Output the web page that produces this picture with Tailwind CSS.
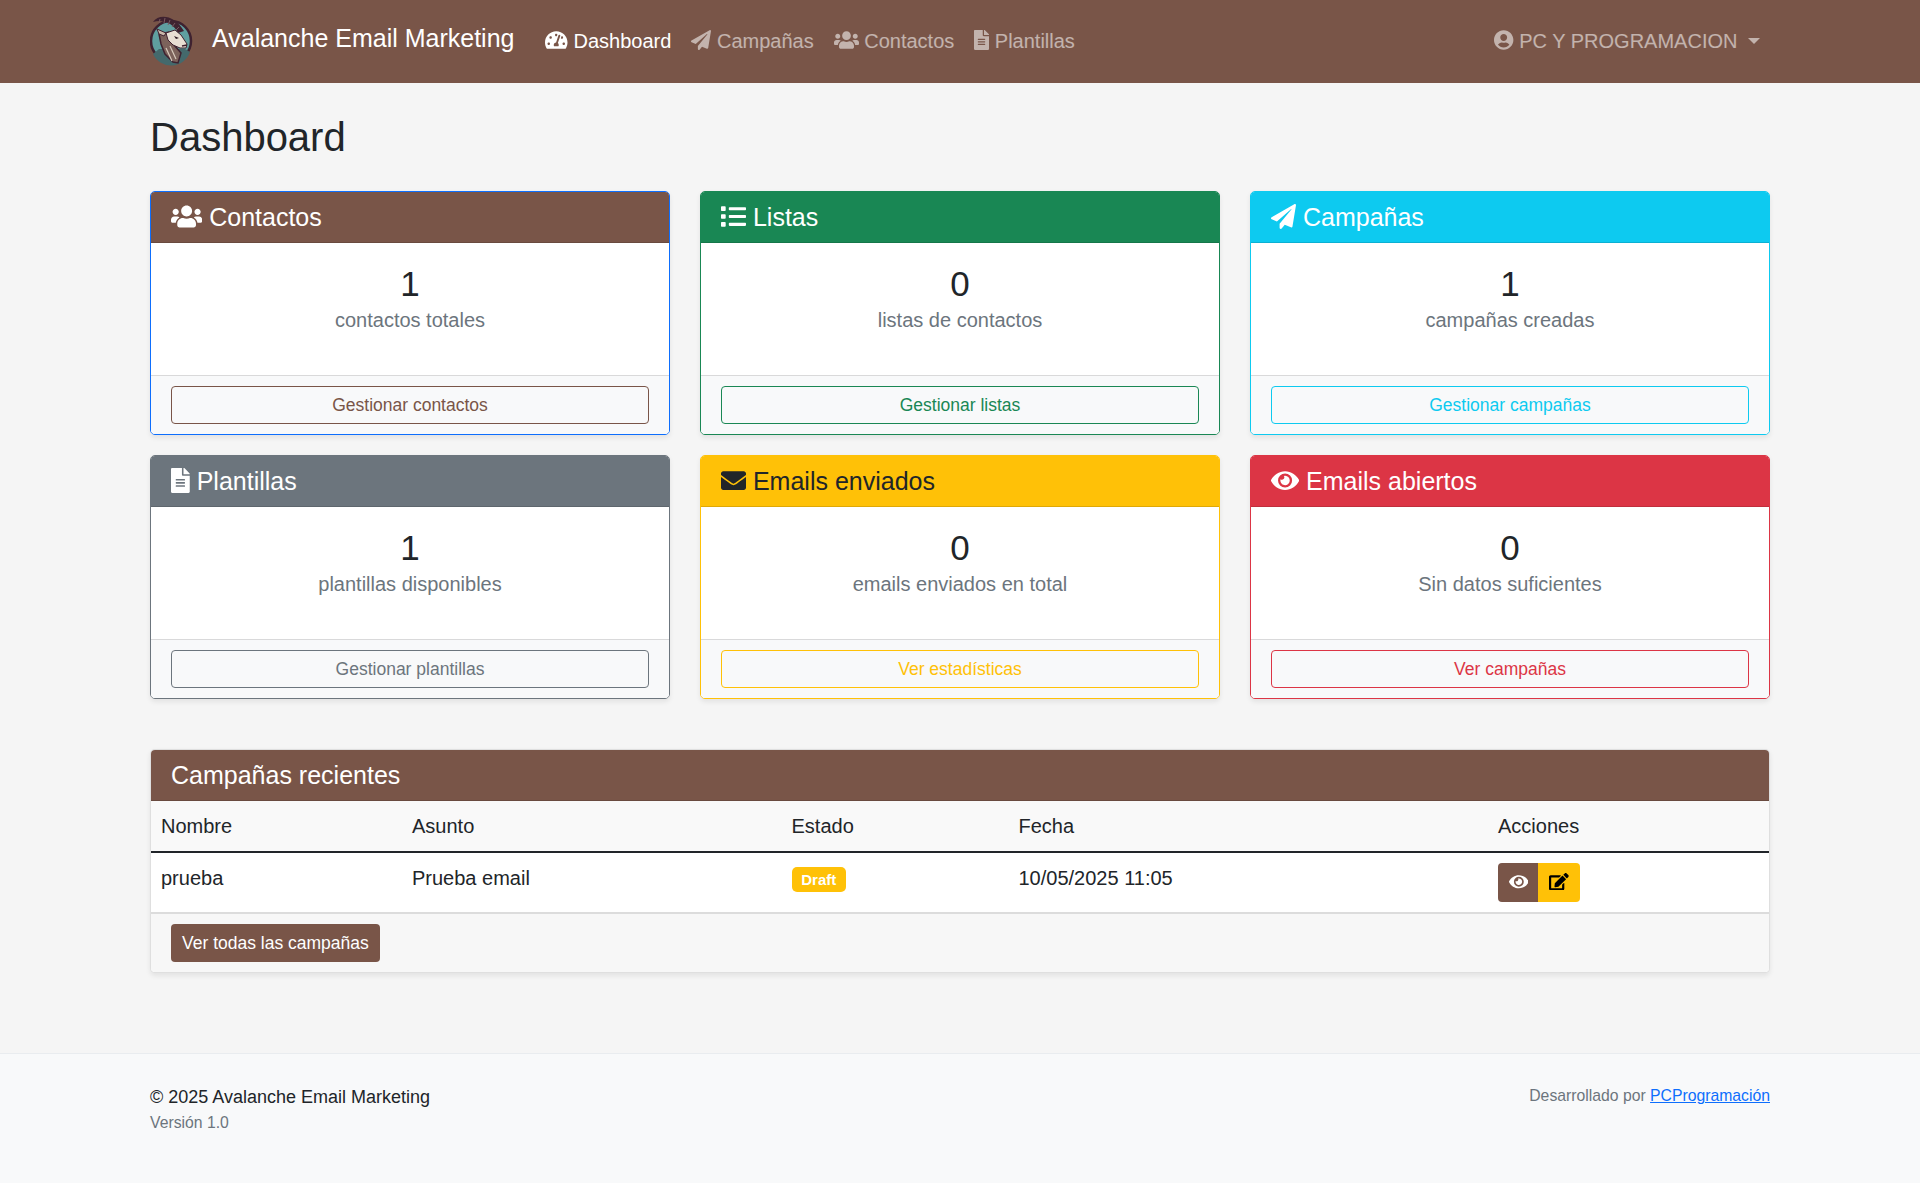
<!doctype html>
<html lang="es">
<head>
<meta charset="utf-8">
<title>Dashboard - Avalanche Email Marketing</title>
<script src="https://cdn.jsdelivr.net/npm/@tailwindcss/browser@4"></script>
</head>
<body class="min-h-screen flex flex-col bg-[#f5f5f5] text-[#212529] text-[20px] leading-[1.5] font-['Liberation_Sans',Arial,sans-serif]">

<!-- navbar -->
<nav class="h-[83px] bg-[#795548] shrink-0">
  <div class="w-[1620px] h-full mx-auto flex items-center">
    <a href="#" class="flex items-center text-white text-[25px] whitespace-nowrap">
      <svg class="w-[45px] h-[50px] mt-[-1px]" viewBox="5 8 45 50">
        <circle cx="26" cy="33" r="20" fill="#5f9fa0" stroke="#3f2230" stroke-width="2.5"/>
        <path d="M8 46 L14 41 L40 41 L45 44 A20 20 0 0 1 8 46z" fill="#44696c"/>
        <path d="M14 26 L24 24 L30 38 L36 45 L33 55 L28 54 L20 46 L16 36z" fill="#7c625b" stroke="#3f2230" stroke-width="1.5"/>
        <path d="M21 40 L27 53 M25 38 L31 51" stroke="#d8cabd" stroke-width="1.2" fill="none"/>
        <path d="M8 14 C14 5 30 7 39 23 L33 25 C28 15 18 11 8 14z" fill="#3f2230"/>
        <path d="M15 11 l-1 4 M20 10 l-1 5 M25 12 l-2 5 M30 15 l-3 4 M34 19 l-3 3" stroke="#7b5b60" stroke-width="1" fill="none"/>
        <path d="M12 21 L21 25 L19 28 L14 26z" fill="#c9b8aa" stroke="#3f2230" stroke-width="1"/>
        <path d="M21 25 L30 22 L36 27 L42 36 L41 40 L35 40 L28 37 L23 32z" fill="#e8dfd4" stroke="#3f2230" stroke-width="1"/>
        <path d="M29 28 L34 30 L31 31z" fill="#2c1a22"/>
        <path d="M37 38 L42 37" stroke="#3f2230" stroke-width="1.5"/>
      </svg>
      <span class="ml-[17px] pb-[6px]">Avalanche Email Marketing</span>
    </a>
    <div class="flex ml-[21px] pb-[2px] whitespace-nowrap">
      <a href="#" class="px-[10px] text-white">
        <svg class="inline w-[1.125em] h-[1em] align-[-0.125em] fill-current" viewBox="0 0 576 512"><path d="M288 32C128.94 32 0 160.94 0 320c0 52.8 14.25 102.26 39.06 144.8 5.61 9.62 16.3 15.2 27.44 15.2h443c11.14 0 21.83-5.58 27.44-15.2C561.75 422.26 576 372.8 576 320c0-159.06-128.94-288-288-288zm0 64c14.71 0 26.58 10.13 30.32 23.65-1.11 2.26-2.64 4.23-3.45 6.67l-9.22 27.67c-5.13 3.49-10.97 6.01-17.64 6.01-17.67 0-32-14.33-32-32S270.33 96 288 96zM96 384c-17.67 0-32-14.33-32-32s14.33-32 32-32 32 14.33 32 32-14.33 32-32 32zm48-160c-17.67 0-32-14.33-32-32s14.33-32 32-32 32 14.33 32 32-14.33 32-32 32zm246.77-72.41l-61.33 184C343.13 347.33 352 364.54 352 384c0 11.72-3.38 22.55-8.88 32H232.88c-5.5-9.45-8.88-20.28-8.88-32 0-33.94 26.5-61.43 59.9-63.59l61.34-184.01c4.17-12.56 17.73-19.45 30.36-15.17 12.57 4.19 19.35 17.79 15.17 30.36zm14.66 57.2l15.52-46.55c3.47-1.29 7.13-2.23 11.05-2.23 17.67 0 32 14.33 32 32s-14.33 32-32 32c-11.38-.01-20.89-6.28-26.57-15.22zM480 384c-17.67 0-32-14.33-32-32s14.33-32 32-32 32 14.33 32 32-14.33 32-32 32z"/></svg>
        Dashboard
      </a>
      <a href="#" class="px-[10px] text-white/55">
        <svg class="inline w-[1em] h-[1em] align-[-0.125em] fill-current" viewBox="0 0 512 512"><path d="M476 3.2L12.5 270.6c-18.1 10.4-15.8 35.6 2.2 43.2L121 358.4l287.3-253.2c5.5-4.9 13.3 2.6 8.6 8.3L176 407v80.5c0 23.6 28.5 32.9 42.5 15.8L282 426l124.6 52.2c14.2 6 30.4-2.9 33-18.2l72-432C515 7.8 493.3-6.8 476 3.2z"/></svg>
        Campañas
      </a>
      <a href="#" class="px-[10px] text-white/55">
        <svg class="inline w-[1.25em] h-[1em] align-[-0.125em] fill-current" viewBox="0 0 640 512"><path d="M96 224c35.3 0 64-28.7 64-64s-28.7-64-64-64-64 28.7-64 64 28.7 64 64 64zm448 0c35.3 0 64-28.7 64-64s-28.7-64-64-64-64 28.7-64 64 28.7 64 64 64zm32 32h-64c-17.6 0-33.5 7.1-45.1 18.6 40.3 22.1 68.9 62 75.1 109.4h66c17.7 0 32-14.3 32-32v-32c0-35.3-28.7-64-64-64zm-256 0c61.9 0 112-50.1 112-112S381.9 32 320 32 208 82.1 208 144s50.1 112 112 112zm76.8 32h-8.3c-20.8 10-43.9 16-68.5 16s-47.6-6-68.5-16h-8.3C179.6 288 128 339.6 128 403.2V432c0 26.5 21.5 48 48 48h288c26.5 0 48-21.5 48-48v-28.8c0-63.6-51.6-115.2-115.2-115.2zm-223.7-13.4C161.5 263.1 145.6 256 128 256H64c-35.3 0-64 28.7-64 64v32c0 17.7 14.3 32 32 32h65.9c6.3-47.4 34.9-87.3 75.2-109.4z"/></svg>
        Contactos
      </a>
      <a href="#" class="px-[10px] text-white/55">
        <svg class="inline w-[0.75em] h-[1em] align-[-0.125em] fill-current" viewBox="0 0 384 512"><path d="M224 136V0H24C10.7 0 0 10.7 0 24v464c0 13.3 10.7 24 24 24h336c13.3 0 24-10.7 24-24V160H248c-13.2 0-24-10.8-24-24zm64 236c0 6.6-5.4 12-12 12H108c-6.6 0-12-5.4-12-12v-8c0-6.6 5.4-12 12-12h168c6.6 0 12 5.4 12 12v8zm0-64c0 6.6-5.4 12-12 12H108c-6.6 0-12-5.4-12-12v-8c0-6.6 5.4-12 12-12h168c6.6 0 12 5.4 12 12v8zm0-72v8c0 6.6-5.4 12-12 12H108c-6.6 0-12-5.4-12-12v-8c0-6.6 5.4-12 12-12h168c6.6 0 12 5.4 12 12zm96-114.1v6.1H256V0h6.1c6.4 0 12.5 2.5 17 7l97.9 98c4.5 4.5 7 10.6 7 16.9z"/></svg>
        Plantillas
      </a>
    </div>
    <a href="#" class="ml-auto px-[10px] pb-[2px] text-white/55 whitespace-nowrap">
      <svg class="inline w-[0.969em] h-[1em] align-[-0.125em] fill-current" viewBox="0 0 496 512"><path d="M248 8C111 8 0 119 0 256s111 248 248 248 248-111 248-248S385 8 248 8zm0 96c48.6 0 88 39.4 88 88s-39.4 88-88 88-88-39.4-88-88 39.4-88 88-88zm0 344c-58.7 0-111.3-26.6-146.5-68.2 18.8-35.4 55.6-59.8 98.5-59.8 2.4 0 4.8.4 7.1 1.1 13 4.2 26.6 6.9 40.9 6.9 14.3 0 28-2.7 40.9-6.9 2.3-.7 4.7-1.1 7.1-1.1 42.9 0 79.7 24.4 98.5 59.8C359.3 421.4 306.7 448 248 448z"/></svg>
      PC Y PROGRAMACION
      <span class="inline-block ml-[5px] align-[4px] border-t-[6px] border-x-[6px] border-x-transparent border-t-current"></span>
    </a>
  </div>
</nav>

<main class="w-[1620px] mx-auto pt-[30px] shrink-0">
  <h2 class="text-[40px] leading-[48px] mb-[30px] font-normal">Dashboard</h2>

  <!-- stat cards -->
  <div class="grid grid-cols-3 gap-x-[30px] gap-y-[20px]">

    <div class="bg-white border border-[#0d6efd] rounded-[5px] shadow-[0_2.5px_5px_rgba(0,0,0,0.075)] overflow-hidden">
      <div class="bg-[#795548] text-white text-[25px] leading-[30px] px-[20px] py-[10px] border-b border-black/12.5">
        <svg class="inline w-[1.25em] h-[1em] align-[-0.125em] fill-current" viewBox="0 0 640 512"><path d="M96 224c35.3 0 64-28.7 64-64s-28.7-64-64-64-64 28.7-64 64 28.7 64 64 64zm448 0c35.3 0 64-28.7 64-64s-28.7-64-64-64-64 28.7-64 64 28.7 64 64 64zm32 32h-64c-17.6 0-33.5 7.1-45.1 18.6 40.3 22.1 68.9 62 75.1 109.4h66c17.7 0 32-14.3 32-32v-32c0-35.3-28.7-64-64-64zm-256 0c61.9 0 112-50.1 112-112S381.9 32 320 32 208 82.1 208 144s50.1 112 112 112zm76.8 32h-8.3c-20.8 10-43.9 16-68.5 16s-47.6-6-68.5-16h-8.3C179.6 288 128 339.6 128 403.2V432c0 26.5 21.5 48 48 48h288c26.5 0 48-21.5 48-48v-28.8c0-63.6-51.6-115.2-115.2-115.2zm-223.7-13.4C161.5 263.1 145.6 256 128 256H64c-35.3 0-64 28.7-64 64v32c0 17.7 14.3 32 32 32h65.9c6.3-47.4 34.9-87.3 75.2-109.4z"/></svg>
        Contactos
      </div>
      <div class="p-[20px] pb-[40px] text-center">
        <h3 class="text-[35px] leading-[42px] font-normal">1</h3>
        <p class="text-[#6c757d]">contactos totales</p>
      </div>
      <div class="bg-[#f8f9fa] border-t border-black/12.5 px-[20px] py-[10px]">
        <a href="#" class="block text-center border border-[#795548] text-[#795548] rounded-[4px] text-[17.5px] leading-[26px] py-[5px]">Gestionar contactos</a>
      </div>
    </div>

    <div class="bg-white border border-[#198754] rounded-[5px] shadow-[0_2.5px_5px_rgba(0,0,0,0.075)] overflow-hidden">
      <div class="bg-[#198754] text-white text-[25px] leading-[30px] px-[20px] py-[10px] border-b border-black/12.5">
        <svg class="inline w-[1em] h-[1em] align-[-0.125em] fill-current" viewBox="0 0 512 512"><path d="M80 368H16a16 16 0 0 0-16 16v64a16 16 0 0 0 16 16h64a16 16 0 0 0 16-16v-64a16 16 0 0 0-16-16zm0-320H16A16 16 0 0 0 0 64v64a16 16 0 0 0 16 16h64a16 16 0 0 0 16-16V64a16 16 0 0 0-16-16zm0 160H16a16 16 0 0 0-16 16v64a16 16 0 0 0 16 16h64a16 16 0 0 0 16-16v-64a16 16 0 0 0-16-16zm416 176H176a16 16 0 0 0-16 16v32a16 16 0 0 0 16 16h320a16 16 0 0 0 16-16v-32a16 16 0 0 0-16-16zm0-320H176a16 16 0 0 0-16 16v32a16 16 0 0 0 16 16h320a16 16 0 0 0 16-16V80a16 16 0 0 0-16-16zm0 160H176a16 16 0 0 0-16 16v32a16 16 0 0 0 16 16h320a16 16 0 0 0 16-16v-32a16 16 0 0 0-16-16z"/></svg>
        Listas
      </div>
      <div class="p-[20px] pb-[40px] text-center">
        <h3 class="text-[35px] leading-[42px] font-normal">0</h3>
        <p class="text-[#6c757d]">listas de contactos</p>
      </div>
      <div class="bg-[#f8f9fa] border-t border-black/12.5 px-[20px] py-[10px]">
        <a href="#" class="block text-center border border-[#198754] text-[#198754] rounded-[4px] text-[17.5px] leading-[26px] py-[5px]">Gestionar listas</a>
      </div>
    </div>

    <div class="bg-white border border-[#0dcaf0] rounded-[5px] shadow-[0_2.5px_5px_rgba(0,0,0,0.075)] overflow-hidden">
      <div class="bg-[#0dcaf0] text-white text-[25px] leading-[30px] px-[20px] py-[10px] border-b border-black/12.5">
        <svg class="inline w-[1em] h-[1em] align-[-0.125em] fill-current" viewBox="0 0 512 512"><path d="M476 3.2L12.5 270.6c-18.1 10.4-15.8 35.6 2.2 43.2L121 358.4l287.3-253.2c5.5-4.9 13.3 2.6 8.6 8.3L176 407v80.5c0 23.6 28.5 32.9 42.5 15.8L282 426l124.6 52.2c14.2 6 30.4-2.9 33-18.2l72-432C515 7.8 493.3-6.8 476 3.2z"/></svg>
        Campañas
      </div>
      <div class="p-[20px] pb-[40px] text-center">
        <h3 class="text-[35px] leading-[42px] font-normal">1</h3>
        <p class="text-[#6c757d]">campañas creadas</p>
      </div>
      <div class="bg-[#f8f9fa] border-t border-black/12.5 px-[20px] py-[10px]">
        <a href="#" class="block text-center border border-[#0dcaf0] text-[#0dcaf0] rounded-[4px] text-[17.5px] leading-[26px] py-[5px]">Gestionar campañas</a>
      </div>
    </div>

    <div class="bg-white border border-[#6c757d] rounded-[5px] shadow-[0_2.5px_5px_rgba(0,0,0,0.075)] overflow-hidden">
      <div class="bg-[#6c757d] text-white text-[25px] leading-[30px] px-[20px] py-[10px] border-b border-black/12.5">
        <svg class="inline w-[0.75em] h-[1em] align-[-0.125em] fill-current" viewBox="0 0 384 512"><path d="M224 136V0H24C10.7 0 0 10.7 0 24v464c0 13.3 10.7 24 24 24h336c13.3 0 24-10.7 24-24V160H248c-13.2 0-24-10.8-24-24zm64 236c0 6.6-5.4 12-12 12H108c-6.6 0-12-5.4-12-12v-8c0-6.6 5.4-12 12-12h168c6.6 0 12 5.4 12 12v8zm0-64c0 6.6-5.4 12-12 12H108c-6.6 0-12-5.4-12-12v-8c0-6.6 5.4-12 12-12h168c6.6 0 12 5.4 12 12v8zm0-72v8c0 6.6-5.4 12-12 12H108c-6.6 0-12-5.4-12-12v-8c0-6.6 5.4-12 12-12h168c6.6 0 12 5.4 12 12zm96-114.1v6.1H256V0h6.1c6.4 0 12.5 2.5 17 7l97.9 98c4.5 4.5 7 10.6 7 16.9z"/></svg>
        Plantillas
      </div>
      <div class="p-[20px] pb-[40px] text-center">
        <h3 class="text-[35px] leading-[42px] font-normal">1</h3>
        <p class="text-[#6c757d]">plantillas disponibles</p>
      </div>
      <div class="bg-[#f8f9fa] border-t border-black/12.5 px-[20px] py-[10px]">
        <a href="#" class="block text-center border border-[#6c757d] text-[#6c757d] rounded-[4px] text-[17.5px] leading-[26px] py-[5px]">Gestionar plantillas</a>
      </div>
    </div>

    <div class="bg-white border border-[#ffc107] rounded-[5px] shadow-[0_2.5px_5px_rgba(0,0,0,0.075)] overflow-hidden">
      <div class="bg-[#ffc107] text-[#212529] text-[25px] leading-[30px] px-[20px] py-[10px] border-b border-black/12.5">
        <svg class="inline w-[1em] h-[1em] align-[-0.125em] fill-current" viewBox="0 0 512 512"><path d="M502.3 190.8c3.9-3.1 9.7-.2 9.7 4.7V400c0 26.5-21.5 48-48 48H48c-26.5 0-48-21.5-48-48V195.6c0-5 5.7-7.8 9.7-4.7 22.4 17.4 52.1 39.5 154.1 113.6 21.1 15.4 56.7 47.8 92.2 47.6 35.7.3 72-32.8 92.3-47.6 102-74.1 131.6-96.3 154-113.7zM256 320c23.2.4 56.6-29.2 73.4-41.4 132.7-96.3 142.8-104.7 173.4-128.7 5.8-4.5 9.2-11.5 9.2-18.9v-19c0-26.5-21.5-48-48-48H48C21.5 64 0 85.5 0 112v19c0 7.4 3.4 14.3 9.2 18.9 30.6 23.9 40.7 32.4 173.4 128.7 16.8 12.2 50.2 41.8 73.4 41.4z"/></svg>
        Emails enviados
      </div>
      <div class="p-[20px] pb-[40px] text-center">
        <h3 class="text-[35px] leading-[42px] font-normal">0</h3>
        <p class="text-[#6c757d]">emails enviados en total</p>
      </div>
      <div class="bg-[#f8f9fa] border-t border-black/12.5 px-[20px] py-[10px]">
        <a href="#" class="block text-center border border-[#ffc107] text-[#ffc107] rounded-[4px] text-[17.5px] leading-[26px] py-[5px]">Ver estadísticas</a>
      </div>
    </div>

    <div class="bg-white border border-[#dc3545] rounded-[5px] shadow-[0_2.5px_5px_rgba(0,0,0,0.075)] overflow-hidden">
      <div class="bg-[#dc3545] text-white text-[25px] leading-[30px] px-[20px] py-[10px] border-b border-black/12.5">
        <svg class="inline w-[1.125em] h-[1em] align-[-0.125em] fill-current" viewBox="0 0 576 512"><path d="M572.52 241.4C518.29 135.59 410.93 64 288 64S57.68 135.64 3.48 241.41a32.35 32.35 0 0 0 0 29.19C57.71 376.41 165.07 448 288 448s230.32-71.64 284.52-177.41a32.35 32.35 0 0 0 0-29.19zM288 400a144 144 0 1 1 144-144 143.93 143.93 0 0 1-144 144zm0-240a95.31 95.31 0 0 0-25.31 3.79 47.85 47.85 0 0 1-66.9 66.9A95.78 95.78 0 1 0 288 160z"/></svg>
        Emails abiertos
      </div>
      <div class="p-[20px] pb-[40px] text-center">
        <h3 class="text-[35px] leading-[42px] font-normal">0</h3>
        <p class="text-[#6c757d]">Sin datos suficientes</p>
      </div>
      <div class="bg-[#f8f9fa] border-t border-black/12.5 px-[20px] py-[10px]">
        <a href="#" class="block text-center border border-[#dc3545] text-[#dc3545] rounded-[4px] text-[17.5px] leading-[26px] py-[5px]">Ver campañas</a>
      </div>
    </div>
  </div>

  <!-- recent campaigns -->
  <div class="mt-[50px] bg-white border border-black/12.5 rounded-[5px] shadow-[0_2.5px_5px_rgba(0,0,0,0.075)] overflow-hidden">
    <div class="bg-[#795548] text-white text-[25px] leading-[30px] px-[20px] py-[10px] border-b border-black/12.5">Campañas recientes</div>
    <table class="w-full table-fixed border-collapse">
      <thead class="bg-[#f9f9f9]">
        <tr class="border-b-2 border-[#212529]">
          <th class="w-[251px] p-[10px] text-left font-normal">Nombre</th>
          <th class="w-[379.5px] p-[10px] text-left font-normal">Asunto</th>
          <th class="w-[227px] p-[10px] text-left font-normal">Estado</th>
          <th class="w-[479.5px] p-[10px] text-left font-normal">Fecha</th>
          <th class="p-[10px] text-left font-normal">Acciones</th>
        </tr>
      </thead>
      <tbody>
        <tr>
          <td class="p-[10px] align-top">prueba</td>
          <td class="p-[10px] align-top">Prueba email</td>
          <td class="p-[10px] align-top"><span class="inline-block bg-[#ffc107] text-white text-[15px] leading-[15px] font-bold px-[9.75px] py-[5.25px] rounded-[5px] align-baseline">Draft</span></td>
          <td class="p-[10px] align-top">10/05/2025 11:05</td>
          <td class="p-[10px] align-top">
            <div class="flex">
              <a href="#" class="w-[40px] pl-[1px] text-center bg-[#795548] text-white text-[17.5px] leading-[27px] py-[6px] rounded-l-[4px]">
                <svg class="inline w-[1.125em] h-[1em] align-[-0.125em] fill-current" viewBox="0 0 576 512"><path d="M572.52 241.4C518.29 135.59 410.93 64 288 64S57.68 135.64 3.48 241.41a32.35 32.35 0 0 0 0 29.19C57.71 376.41 165.07 448 288 448s230.32-71.64 284.52-177.41a32.35 32.35 0 0 0 0-29.19zM288 400a144 144 0 1 1 144-144 143.93 143.93 0 0 1-144 144zm0-240a95.31 95.31 0 0 0-25.31 3.79 47.85 47.85 0 0 1-66.9 66.9A95.78 95.78 0 1 0 288 160z"/></svg>
              </a>
              <a href="#" class="w-[42px] text-center bg-[#ffc107] text-black text-[17.5px] leading-[27px] py-[6px] rounded-r-[4px]">
                <svg class="inline w-[1.125em] h-[1em] align-[-0.125em] fill-current" viewBox="0 0 576 512"><path d="M402.6 83.2l90.2 90.2c3.8 3.8 3.8 10 0 13.8L274.4 405.6l-92.8 10.3c-12.4 1.4-22.9-9.1-21.5-21.5l10.3-92.8L388.8 83.2c3.8-3.8 10-3.8 13.8 0zm162-22.9l-48.8-48.8c-15.2-15.2-39.9-15.2-55.2 0l-35.4 35.4c-3.8 3.8-3.8 10 0 13.8l90.2 90.2c3.8 3.8 10 3.8 13.8 0l35.4-35.4c15.2-15.3 15.2-40 0-55.2zM384 346.2V448H64V128h229.8c3.2 0 6.2-1.3 8.5-3.5l40-40c7.6-7.6 2.2-20.5-8.5-20.5H48C21.5 64 0 85.5 0 112v352c0 26.5 21.5 48 48 48h352c26.5 0 48-21.5 48-48V306.2c0-10.7-12.9-16-20.5-8.5l-40 40c-2.2 2.3-3.5 5.3-3.5 8.5z"/></svg>
              </a>
            </div>
          </td>
        </tr>
      </tbody>
    </table>
    <div class="bg-[#f7f7f7] border-t-2 border-[#dcdcdc] px-[20px] py-[10px]">
      <a href="#" class="inline-block align-top bg-[#795548] text-white text-[17.5px] leading-[26px] px-[11px] py-[6px] rounded-[4px]">Ver todas las campañas</a>
    </div>
  </div>
</main>

<footer class="mt-[80px] grow bg-[#f8f9fa] border-t border-[#e9ecef] pt-[30px]">
  <div class="w-[1620px] mx-auto flex justify-between items-start">
    <div>
      <p class="text-[18px] leading-[27px]">© 2025 Avalanche Email Marketing</p>
      <p class="text-[15.75px] leading-[24px] text-[#6c757d]">Versión 1.0</p>
    </div>
    <p class="text-[15.75px] leading-[24px] text-[#6c757d]">Desarrollado por <a href="#" class="text-[#0d6efd] underline">PCProgramación</a></p>
  </div>
</footer>
</body>
</html>
